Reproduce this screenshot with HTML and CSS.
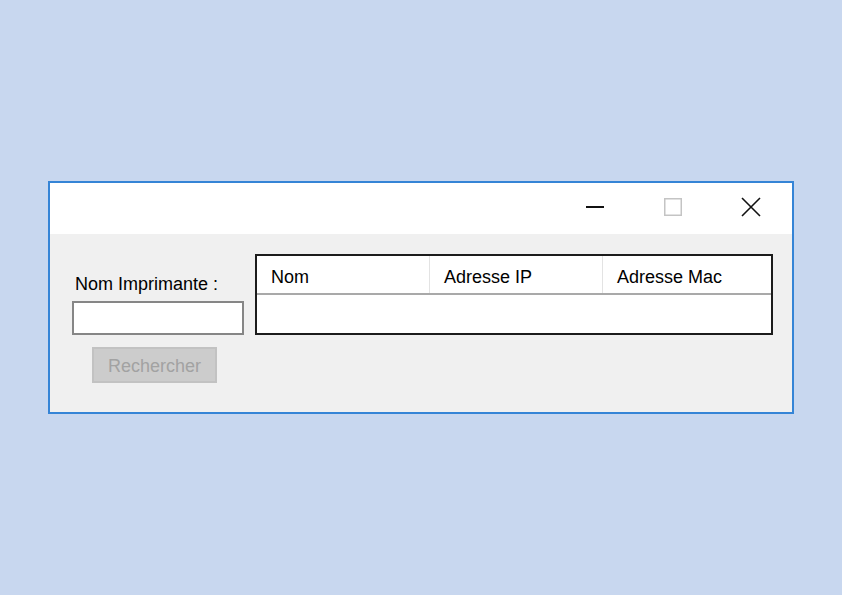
FILE: index.html
```html
<!DOCTYPE html>
<html lang="fr">
<head>
<meta charset="utf-8">
<title>Recherche imprimante</title>
<link rel="stylesheet" href="styles.css">
</head>
<body>
<div class="window">
  <div class="titlebar">
    <div class="tb-btn">
      <svg width="18" height="2" viewBox="0 0 18 2"><rect x="0" y="0" width="18" height="2" fill="#111"/></svg>
    </div>
    <div class="tb-btn">
      <svg width="18" height="18" viewBox="0 0 18 18"><rect x="0.75" y="0.75" width="16.5" height="16.5" fill="none" stroke="#c4c4c4" stroke-width="1.5"/></svg>
    </div>
    <div class="tb-btn">
      <svg width="20" height="20" viewBox="0 0 20 20"><path d="M1 1 L19 19 M19 1 L1 19" stroke="#111" stroke-width="1.6" fill="none"/></svg>
    </div>
  </div>
  <div class="content">
    <div class="side">
      <label class="label" for="nom">Nom Imprimante :</label>
      <input class="field" id="nom" type="text">
      <button class="btn" disabled>Rechercher</button>
    </div>
    <div class="list">
      <div class="list-head">
        <div class="col">Nom</div>
        <div class="col">Adresse IP</div>
        <div class="col last">Adresse Mac</div>
      </div>
    </div>
  </div>
</div>
</body>
</html>
```

FILE: styles.css
```css
html, body {
  margin: 0;
  padding: 0;
}
body {
  width: 842px;
  height: 595px;
  background: #c8d7ef;
  font-family: "Liberation Sans", Arial, sans-serif;
  font-size: 18px;
  color: #000;
  overflow: hidden;
}
.window {
  margin: 181px 0 0 48px;
  width: 746px;
  height: 233px;
  box-sizing: border-box;
  border: 2px solid #3584d6;
  display: flex;
  flex-direction: column;
  background: #f0f0f0;
}
.titlebar {
  height: 51px;
  background: #fff;
  display: flex;
  justify-content: flex-end;
  align-items: flex-start;
  padding-right: 2px;
}
.tb-btn {
  width: 78px;
  height: 47px;
  display: flex;
  align-items: center;
  justify-content: center;
}
.content {
  flex: 1;
  display: flex;
  align-items: flex-start;
  padding: 20px 19px 0 22px;
}
.side {
  width: 172px;
  display: flex;
  flex-direction: column;
  align-items: flex-start;
  padding-top: 20px;
  margin-right: 11px;
}
.label {
  line-height: 20px;
  margin-left: 3px;
  height: 20px;
}
.field {
  margin-top: 7px;
  width: 172px;
  height: 34px;
  box-sizing: border-box;
  border: 2px solid #868686;
  background: #fff;
  padding: 0 4px;
  font: inherit;
  outline: none;
}
.btn {
  margin-top: 12px;
  margin-left: 20px;
  width: 125px;
  height: 36px;
  box-sizing: border-box;
  background: #cccccc;
  border: 2px solid #c2c2c2;
  color: #a2a2a2;
  font: inherit;
  padding: 2px 0 0;
}
.list {
  width: 518px;
  height: 81px;
  box-sizing: border-box;
  border: 2px solid #1c1c1c;
  background: #fff;
}
.list-head {
  display: flex;
  height: 39px;
  box-sizing: border-box;
  border-bottom: 2px solid #a9a9a9;
}
.col {
  width: 173px;
  box-sizing: border-box;
  border-right: 1px solid #e3e3e3;
  padding: 5px 0 0 14px;
  line-height: 32px;
}
.col.last {
  flex: 1;
  border-right: none;
}
```
